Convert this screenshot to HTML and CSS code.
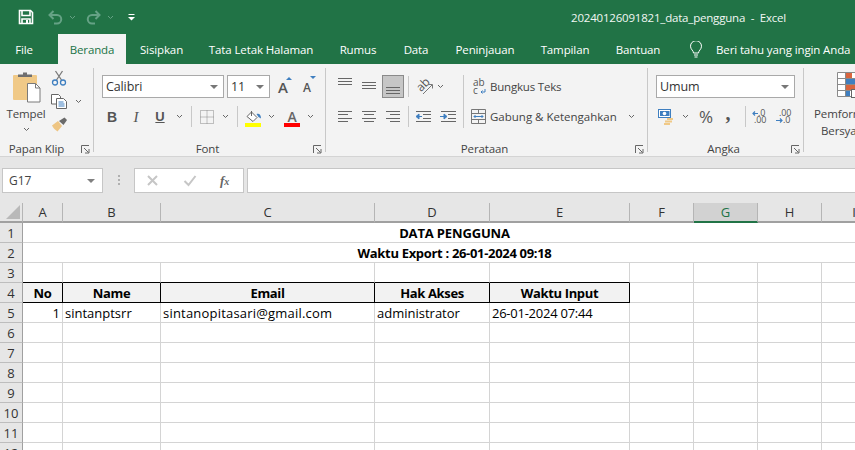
FILE: index.html
```html
<!DOCTYPE html>
<html lang="id">
<head>
<meta charset="utf-8">
<title>20240126091821_data_pengguna - Excel</title>
<link rel="stylesheet" href="styles.css">
</head>
<body>
<div class="app">
  <header class="titlebar">
    <svg class="qat-save" width="16" height="16" viewBox="0 0 16 16"><path d="M1.500 1.500h11l2 2v11h-13z" fill="none" stroke="#fff" stroke-width="1.600"/><path d="M4 2v4.500h8V2" fill="none" stroke="#fff" stroke-width="1.600"/><path d="M4 14.500V10h8v4.500" fill="none" stroke="#fff" stroke-width="1.600"/><rect x="8" y="11" width="2" height="3" fill="#fff"/></svg>
    <svg class="qat-arrow" width="15" height="15" viewBox="0 0 15 15"><path d="M5.500 1 1.500 5l4 4M2 5h7a4 4 0 0 1 0 8.500H6" fill="none" stroke="#65a285" stroke-width="2"/></svg>
    <svg class="qat-chev" width="7" height="5" viewBox="0 0 7 5"><path d="M1 1l2.500 2.500L6 1" fill="none" stroke="#65a285"/></svg>
    <svg class="qat-arrow" width="15" height="15" viewBox="0 0 15 15"><path d="M9.500 1l4 4-4 4M13 5H6a4 4 0 0 0 0 8.500h3" fill="none" stroke="#65a285" stroke-width="2"/></svg>
    <svg class="qat-chev" width="7" height="5" viewBox="0 0 7 5"><path d="M1 1l2.500 2.500L6 1" fill="none" stroke="#65a285"/></svg>
    <svg class="qat-custom" width="7" height="7" viewBox="0 0 7 7"><path d="M.5.500h6" stroke="#fff"/><path d="M0 3h7L3.500 6.500z" fill="#fff"/></svg>
    <div class="doc-title">20240126091821_data_pengguna&nbsp; -&nbsp; Excel</div>
  </header>

  <nav class="tabs">
    <span class="tab tab-file">File</span>
    <span class="tab tab-active">Beranda</span>
    <span class="tab tab-sisipkan">Sisipkan</span>
    <span class="tab tab-tata">Tata Letak Halaman</span>
    <span class="tab tab-rumus">Rumus</span>
    <span class="tab tab-data">Data</span>
    <span class="tab tab-tinjau">Peninjauan</span>
    <span class="tab tab-tampil">Tampilan</span>
    <span class="tab tab-bantu">Bantuan</span>
    <svg class="bulb" width="14" height="17" viewBox="0 0 14 17"><path d="M4.500 12c0-2.500-3-3.500-3-6.800a5.500 5.500 0 0 1 11 0C12.500 8.500 9.500 9.500 9.500 12zM5 14h4M5.500 16h3" fill="none" stroke="#fff"/></svg>
    <span class="tell">Beri tahu yang ingin Anda</span>
  </nav>

  <section class="ribbon">
    <div class="group g-clip">
      <div class="clip-body">
        <div class="paste">
          <svg width="30" height="32" viewBox="0 0 30 32"><rect x="1" y="4" width="24" height="25" rx="1" fill="#f0c987"/><path d="M6 6V3.500h5V1.500h4v2h5V6z" fill="#6f6f6f"/><path d="M15.500 12.500h8l4.500 4.500v14H15.500z" fill="#fff" stroke="#7a7a7a"/><path d="M23.500 12.500V17H28" fill="none" stroke="#7a7a7a"/></svg>
          <span class="paste-label">Tempel</span>
          <svg class="chev" width="7" height="5" viewBox="0 0 7 5"><path d="M1 1l2.500 2.500L6 1" fill="none" stroke="#666"/></svg>
        </div>
        <div class="clip-tools">
          <svg class="scissors" width="16" height="16" viewBox="0 0 16 16"><path d="M4.500 1 10.500 10M11.500 1 5.500 10" stroke="#7a7a7a" stroke-width="1.300" fill="none"/><circle cx="4" cy="12.500" r="2.500" fill="none" stroke="#3f7fc0" stroke-width="1.300"/><circle cx="12" cy="12.500" r="2.500" fill="none" stroke="#3f7fc0" stroke-width="1.300"/></svg>
          <div class="copy-row">
            <svg width="16" height="15" viewBox="0 0 16 15"><path d="M.5.500h7l2 2V10H.5z" fill="#fff" stroke="#666"/><path d="M5.500 4.500h7l3 3v7h-10z" fill="#fff" stroke="#666"/><path d="M7.500 8h5M7.500 10h6M7.500 12h6" stroke="#3f7fc0"/></svg>
            <svg class="chev" width="7" height="5" viewBox="0 0 7 5"><path d="M1 1l2.500 2.500L6 1" fill="none" stroke="#666"/></svg>
          </div>
          <svg class="brush" width="17" height="15" viewBox="0 0 17 15"><path d="M1 8.500 7 4l4 5-4.500 5.500C4.500 13 2 11 1 8.500z" fill="#eec583"/><path d="M8 4 13.500.5 16 3l-3.500 5z" fill="#6a6a6a"/></svg>
        </div>
      </div>
      <div class="group-foot"><span class="group-label label-clip">Papan Klip</span><svg class="launcher" width="9" height="9" viewBox="0 0 9 9"><path d="M.5 8V.5H8M3 3l4.500 4.500M4 8h4V4" fill="none" stroke="#666"/></svg></div>
    </div>

    <div class="group g-font">
      <div class="font-row1">
        <div class="select"><span class="select-text">Calibri</span><i class="caret"></i></div>
        <div class="select"><span class="select-text">11</span><i class="caret"></i></div>
        <span class="grow-a">A<i class="tri-up"></i></span>
        <span class="shrink-a">A<i class="tri-down"></i></span>
      </div>
      <div class="font-row2">
        <b class="fmt">B</b>
        <i class="fmt fmt-i">I</i>
        <u class="fmt fmt-u">U</u>
        <svg class="chev" width="7" height="5" viewBox="0 0 7 5"><path d="M1 1l2.500 2.500L6 1" fill="none" stroke="#666"/></svg>
        <span class="vsep"></span>
        <svg width="14" height="14" viewBox="0 0 14 14"><path d="M.5.500h13v13H.5zM7 .5v13M.5 7h13" fill="none" stroke="#888" stroke-dasharray="1 1"/></svg>
        <svg class="chev" width="7" height="5" viewBox="0 0 7 5"><path d="M1 1l2.500 2.500L6 1" fill="none" stroke="#666"/></svg>
        <span class="vsep"></span>
        <div class="color-btn">
          <svg width="16" height="13" viewBox="0 0 16 13"><path d="M2 6.500 6.500 2l5.500 5.500-4 4z" fill="#fff" stroke="#666"/><path d="M6.500 1V6" stroke="#666"/><path d="M11.500 4c2.500-1 4.500.5 4.500 4.500l-2.500-1.500z" fill="#3f7fc0"/></svg>
          <span class="bar bar-yellow"></span>
        </div>
        <svg class="chev" width="7" height="5" viewBox="0 0 7 5"><path d="M1 1l2.500 2.500L6 1" fill="none" stroke="#666"/></svg>
        <div class="color-btn">
          <span class="color-a">A</span>
          <span class="bar bar-red"></span>
        </div>
        <svg class="chev" width="7" height="5" viewBox="0 0 7 5"><path d="M1 1l2.500 2.500L6 1" fill="none" stroke="#666"/></svg>
      </div>
      <div class="group-foot"><span class="group-label">Font</span><svg class="launcher" width="9" height="9" viewBox="0 0 9 9"><path d="M.5 8V.5H8M3 3l4.500 4.500M4 8h4V4" fill="none" stroke="#666"/></svg></div>
    </div>

    <div class="group g-align">
      <div class="align-body">
        <div class="align-left">
          <div class="align-row">
            <svg class="top" width="14" height="8" viewBox="0 0 14 8"><path d="M0 .5h14M0 3.500h14M0 6.500h14" stroke="#666"/></svg>
            <svg class="mid" width="14" height="8" viewBox="0 0 14 8"><path d="M0 .5h14M0 3.500h14M0 6.500h14" stroke="#666"/></svg>
            <span class="valign-on"><svg width="14" height="7" viewBox="0 0 14 7"><path d="M0 .5h14M0 3.500h14M0 6.500h14" stroke="#666"/></svg></span>
            <span class="vsep"></span>
            <svg class="svg-open" width="17" height="17" viewBox="0 0 17 17"><text class="svg-ab" x="1" y="11" transform="rotate(-45 7 8)">ab</text><path d="M7 16 16 7M12.500 6.500H16.500V10.500" fill="none" stroke="#777"/></svg>
            <svg class="chev" width="7" height="5" viewBox="0 0 7 5"><path d="M1 1l2.500 2.500L6 1" fill="none" stroke="#666"/></svg>
          </div>
          <div class="align-row2">
            <svg width="14" height="11" viewBox="0 0 14 11"><path d="M0 .5h14M0 3.500h10M0 7.500h14M0 10.500h10" stroke="#666"/></svg>
            <svg width="14" height="11" viewBox="0 0 14 11"><path d="M0 .5h14M2 3.500h10M0 7.500h14M2 10.500h10" stroke="#666"/></svg>
            <svg width="14" height="11" viewBox="0 0 14 11"><path d="M0 .5h14M4 3.500h10M0 7.500h14M4 10.500h10" stroke="#666"/></svg>
            <span class="vsep"></span>
            <svg width="16" height="11" viewBox="0 0 16 11"><path d="M1 .5h15M8 3.500h8M8 7.500h8M1 10.500h15" stroke="#666"/><path d="M7 5.500H2.500M4 3 1 5.500 4 8z" stroke="#3f7fc0" fill="#3f7fc0"/></svg>
            <svg width="16" height="11" viewBox="0 0 16 11"><path d="M1 .5h15M8 3.500h8M8 7.500h8M1 10.500h15" stroke="#666"/><path d="M0 5.500h5.500M4 3 7 5.500 4 8z" stroke="#3f7fc0" fill="#3f7fc0"/></svg>
          </div>
        </div>
        <div class="align-right">
          <div class="wrap-row">
            <svg class="svg-open" width="15" height="17" viewBox="0 0 15 17"><text class="svg-wrap" x="2" y="8">ab</text><text class="svg-wrap" x="2" y="16">c</text><path d="M14 11v3H10M11.500 12.500 10 14l1.500 1.500" fill="none" stroke="#3f7fc0"/></svg>
            <span class="wrap-text wrap-tight">Bungkus Teks</span>
          </div>
          <div class="merge-row">
            <svg width="15" height="15" viewBox="0 0 15 15"><path d="M.5.500h14v14H.5zM.5 4.500h14M.5 10.500h14M7.500.5v4M7.500 10.500v4" fill="none" stroke="#777"/><path d="M3 7.500h9" stroke="#3f7fc0"/><path d="M4.500 6 3 7.500 4.500 9M10.500 6 12 7.500 10.500 9" fill="none" stroke="#3f7fc0"/></svg>
            <span class="wrap-text">Gabung &amp; Ketengahkan</span>
            <svg class="chev merge-chev" width="7" height="5" viewBox="0 0 7 5"><path d="M1 1l2.500 2.500L6 1" fill="none" stroke="#666"/></svg>
          </div>
        </div>
      </div>
      <div class="group-foot"><span class="group-label">Perataan</span><svg class="launcher" width="9" height="9" viewBox="0 0 9 9"><path d="M.5 8V.5H8M3 3l4.500 4.500M4 8h4V4" fill="none" stroke="#666"/></svg></div>
    </div>

    <div class="group g-num">
      <div class="select select-num"><span class="select-text">Umum</span><i class="caret"></i></div>
      <div class="num-row">
        <svg width="16" height="16" viewBox="0 0 16 16"><rect x=".5" y=".5" width="12" height="8" fill="#fff" stroke="#3f7fc0"/><path d="M2 2h9.500v5H2z" fill="#3f7fc0"/><circle cx="6.500" cy="4.500" r="1.800" fill="#fff"/><path d="M9 9h6v2H9zM7 11.500h7v2H7zM6 14h6v2H6z" fill="#f0c987"/></svg>
        <svg class="chev" width="7" height="5" viewBox="0 0 7 5"><path d="M1 1l2.500 2.500L6 1" fill="none" stroke="#666"/></svg>
        <span class="pct">%</span>
        <b class="comma">,</b>
        <span class="vsep"></span>
        <svg class="svg-open" width="16" height="14" viewBox="0 0 16 14"><text class="svg-num" x="6" y="6">.0</text><text class="svg-num" x="2" y="13">.00</text><path d="M6 3.500H1M3 1.500 1 3.500l2 2" fill="none" stroke="#3f7fc0" stroke-width="1.200"/></svg>
        <svg class="svg-open" width="16" height="14" viewBox="0 0 16 14"><text class="svg-num" x="3" y="6">.00</text><text class="svg-num" x="7" y="13">.0</text><path d="M0 10.500h6M4 8.500l2 2-2 2" fill="none" stroke="#3f7fc0" stroke-width="1.200"/></svg>
      </div>
      <div class="group-foot"><span class="group-label">Angka</span><svg class="launcher" width="9" height="9" viewBox="0 0 9 9"><path d="M.5 8V.5H8M3 3l4.500 4.500M4 8h4V4" fill="none" stroke="#666"/></svg></div>
    </div>

    <div class="group g-cond">
      <svg class="cond-icon" width="25" height="26" viewBox="0 0 25 26"><path d="M.5.500h24v24H.5zM.5 6.500h24M.5 12.500h24M.5 18.500h24M8.500.5v24" fill="#fff" stroke="#8a8a8a"/><rect x="9" y="1" width="6" height="5" fill="#d9653f"/><rect x="9" y="7" width="15" height="5" fill="#3f7fc0"/><rect x="9" y="13" width="9" height="5" fill="#d9653f"/><rect x="9" y="19" width="4" height="5" fill="#3f7fc0"/><rect x="14.500" y="17.500" width="10" height="8" fill="#fff" stroke="#666"/></svg>
      <span class="cond-text">Pemformatan</span>
      <span class="cond-text cond-text2">Bersyarat</span>
    </div>
  </section>

  <section class="formula">
    <div class="namebox"><span>G17</span><i class="caret caret-name"></i></div>
    <span class="grip"></span>
    <div class="fx-box">
      <svg width="13" height="13" viewBox="0 0 13 13"><path d="M2 2l9 9M11 2l-9 9" stroke="#c6c6c6" stroke-width="2"/></svg>
      <svg width="14" height="13" viewBox="0 0 14 13"><path d="M1.500 7l4 4 7-9" fill="none" stroke="#c6c6c6" stroke-width="2"/></svg>
      <span class="fx">f<small>x</small></span>
    </div>
    <div class="formula-input"></div>
  </section>

  <main class="sheet">
    <table class="grid">
      <colgroup>
        <col class="c-row"><col class="c-a"><col class="c-b"><col class="c-c"><col class="c-d"><col class="c-e"><col class="c-std"><col class="c-std"><col class="c-std"><col class="c-std">
      </colgroup>
      <thead>
        <tr>
          <th class="corner"><svg class="corner-tri" width="14" height="14" viewBox="0 0 14 14"><path d="M14 0v14H0z" fill="#b9b9b9"/></svg></th>
          <th>A</th><th>B</th><th>C</th><th>D</th><th>E</th><th>F</th><th class="col-sel">G</th><th>H</th><th>I</th>
        </tr>
      </thead>
      <tbody>
        <tr><th>1</th><td colspan="9" class="merged merged-title">DATA PENGGUNA</td></tr>
        <tr><th>2</th><td colspan="9" class="merged">Waktu Export : 26-01-2024 09:18</td></tr>
        <tr><th>3</th><td class="above"></td><td class="above"></td><td class="above"></td><td class="above"></td><td class="above"></td><td></td><td></td><td></td><td></td></tr>
        <tr><th>4</th><td class="hd">No</td><td class="hd">Name</td><td class="hd">Email</td><td class="hd">Hak Akses</td><td class="hd">Waktu Input</td><td></td><td></td><td></td><td></td></tr>
        <tr><th>5</th><td class="num">1</td><td>sintanptsrr</td><td class="email">sintanopitasari@gmail.com</td><td>administrator</td><td class="date">26-01-2024 07:44</td><td></td><td></td><td></td><td></td></tr>
        <tr><th>6</th><td></td><td></td><td></td><td></td><td></td><td></td><td></td><td></td><td></td></tr>
        <tr><th>7</th><td></td><td></td><td></td><td></td><td></td><td></td><td></td><td></td><td></td></tr>
        <tr><th>8</th><td></td><td></td><td></td><td></td><td></td><td></td><td></td><td></td><td></td></tr>
        <tr><th>9</th><td></td><td></td><td></td><td></td><td></td><td></td><td></td><td></td><td></td></tr>
        <tr><th>10</th><td></td><td></td><td></td><td></td><td></td><td></td><td></td><td></td><td></td></tr>
        <tr><th>11</th><td></td><td></td><td></td><td></td><td></td><td></td><td></td><td></td><td></td></tr>
        <tr><th>12</th><td></td><td></td><td></td><td></td><td></td><td></td><td></td><td></td><td></td></tr>
      </tbody>
    </table>
  </main>
</div>
</body>
</html>
```

FILE: styles.css
```css
* { box-sizing: border-box; }
html, body { margin: 0; padding: 0; }
body { width: 855px; height: 450px; overflow: hidden; font-family: "Open Sans", "Noto Sans", sans-serif; color: #444; background: #fff; }
.app { width: 855px; height: 450px; overflow: hidden; display: flex; flex-direction: column; }
svg { display: block; flex-shrink: 0; }
.svg-open { overflow: visible; }

/* title bar */
.titlebar { height: 34px; flex: none; background: #217346; display: flex; align-items: center; color: #fff; }
.qat-save { margin-left: 18px; }
.qat-arrow { margin-left: 14px; }
.qat-arrow + .qat-chev { margin-left: 6px; }
.qat-chev + .qat-arrow { margin-left: 10px; }
.qat-custom { margin-left: 14px; }
.doc-title { margin-left: auto; margin-right: 69px; font-size: 11.5px; letter-spacing: -.2px; white-space: nowrap; color: #f2f7f4; }

/* tabs */
.tabs { height: 30px; flex: none; background: #217346; display: flex; align-items: stretch; color: #fff; font-size: 11.5px; letter-spacing: -.12px; white-space: nowrap; overflow: hidden; }
.tab { display: flex; align-items: center; justify-content: center; }
.tab-file { width: 58px; padding-left: 2px; padding-right: 12px; }
.tab-active { width: 68px; background: #f3f3f3; color: #217346; }
.tab-sisipkan { width: 70px; padding-left: 1px; }
.tab-tata { width: 130px; }
.tab-rumus { width: 64px; }
.tab-data { width: 52px; }
.tab-tinjau { width: 86px; }
.tab-tampil { width: 74px; }
.tab-bantu { width: 72px; }
.bulb { margin: 7px 0 0 15px; align-self: flex-start; }
.tell { margin-left: 13px; align-self: center; }

/* ribbon */
.ribbon { height: 93px; flex: none; background: #f3f3f3; border-bottom: 1px solid #d4d4d4; padding-top: 4px; display: flex; align-items: flex-start; overflow: hidden; font-size: 11.5px; letter-spacing: -.12px; color: #444; }
.group { height: 84px; flex: none; border-right: 1px solid #c8c8c8; display: flex; flex-direction: column; padding-top: 7px; }
.group-foot { margin-top: auto; margin-bottom: -5px; height: 16px; display: flex; align-items: center; flex: none; }
.group-label { flex: 1; text-align: center; line-height: 16px; }
.label-clip { padding-right: 8px; }
.launcher { margin-right: 3px; margin-top: 1px; }
.chev { flex: none; }
.vsep { display: block; width: 1px; height: 21px; background: #c8c8c8; }

.g-clip { width: 94px; padding-top: 0; }
.clip-body { display: flex; height: 68px; }
.paste { width: 52px; display: flex; flex-direction: column; align-items: center; }
.paste svg:first-child { margin: 3px 0 0 2px; }
.paste-label { margin-top: 2px; line-height: 17px; }
.paste .chev { margin-top: 5px; }
.clip-tools { display: flex; flex-direction: column; padding-top: 2px; gap: 8px; }
.clip-tools .scissors { margin-left: -1px; }
.clip-tools .brush { margin-left: -1px; }
.copy-row { display: flex; align-items: center; gap: 8px; margin-left: -1px; }

.g-font { width: 232px; padding-left: 8px; }
.font-row1 { display: flex; align-items: center; height: 23px; }
.select { height: 23px; background: #fff; border: 1px solid #a9a9a9; display: flex; align-items: center; justify-content: space-between; padding: 0 5px 0 3px; font-size: 12.5px; color: #333; flex: none; }
.select:first-child { width: 122px; }
.select:nth-child(2) { width: 43px; margin-left: 3px; }
.caret { display: block; width: 0; height: 0; border: 4px solid transparent; border-top-color: #777; border-bottom-width: 0; }
.grow-a, .shrink-a { position: relative; color: #555; line-height: 16px; font-weight: 600; }
.grow-a { margin-left: 8px; width: 25px; font-size: 15px; }
.shrink-a { width: 14px; margin-top: 2px; font-size: 12px; }
.tri-up, .tri-down { position: absolute; width: 0; height: 0; border: 3px solid transparent; }
.grow-a .tri-up { left: 8px; top: -2px; border-bottom: 3px solid #3f7fc0; border-top-width: 0; }
.shrink-a .tri-down { left: 7px; top: -4px; border-top: 3px solid #3f7fc0; border-bottom-width: 0; }
.font-row2 { display: grid; grid-template-columns: 20px 28px 20px 18px 6px 25px 12px 12px 20px 16px 26px 10px; justify-items: center; align-items: center; height: 23px; margin-top: 7px; }
.fmt { font-family: "Liberation Sans", sans-serif; font-size: 14px; color: #555; line-height: 16px; }
.fmt-i { font-family: "Liberation Serif", serif; font-size: 15px; }
.fmt-u { font-weight: 700; font-size: 13px; }
.color-btn { display: flex; flex-direction: column; align-items: center; width: 16px; height: 20px; justify-content: flex-end; }
.bar { display: block; width: 16px; height: 4px; flex: none; }
.bar-yellow { background: #ffff00; }
.bar-red { background: #ff0000; }
.color-a { font-size: 14px; line-height: 13px; color: #666; font-weight: 600; }

.g-align { width: 322px; padding-left: 8px; }
.align-body { display: flex; height: 53px; }
.align-left { width: 130px; flex: none; border-right: 1px solid #c8c8c8; }
.align-row { display: grid; grid-template-columns: 22px 26px 22px 8px 24px 8px; justify-items: center; align-items: center; height: 23px; }
.align-row .top { margin-bottom: 9px; }
.align-row .mid { margin-top: -1px; }
.valign-on { width: 22px; height: 23px; background: #c6c6c6; border: 1px solid #8a8a8a; display: flex; align-items: flex-end; justify-content: center; padding-bottom: 3px; }
.align-row2 { display: grid; grid-template-columns: 22px 26px 22px 8px 22px 28px; justify-items: center; align-items: center; height: 23px; margin-top: 7px; }
.align-right { padding-left: 7px; flex: 1; }
.wrap-row { display: flex; align-items: center; height: 23px; }
.merge-row { display: flex; align-items: center; height: 23px; margin-top: 7px; }
.wrap-text { margin-left: 4px; white-space: nowrap; color: #444; letter-spacing: 0; }
.wrap-tight { letter-spacing: -.2px; }
.merge-chev { margin-left: 11px; }
.svg-ab { font-size: 12px; fill: #555; font-family: "Open Sans", sans-serif; }
.svg-wrap { font-size: 10px; fill: #555; font-family: "Open Sans", sans-serif; }
.svg-num { font-size: 9px; fill: #555; font-family: "Open Sans", sans-serif; }

.g-num { width: 156px; padding-left: 8px; }
.select-num.select { width: 139px; }
.num-row { display: grid; grid-template-columns: 20px 18px 24px 20px 14px 16px 31px; justify-items: center; align-items: center; height: 23px; margin-top: 7px; }
.pct { font-size: 17px; color: #555; line-height: 18px; }
.comma { font-size: 20px; color: #555; line-height: 14px; font-family: "Liberation Serif", serif; margin-top: -8px; }

.g-cond { width: 60px; border-right: 0; padding-top: 4px; padding-left: 10px; }
.cond-icon { margin-left: 23px; }
.cond-text { white-space: nowrap; line-height: 17px; margin-top: 7px; }
.cond-text2 { margin: 0 0 0 7px; }

/* formula bar */
.formula { height: 46px; flex: none; background: #e6e6e6; display: flex; align-items: flex-start; padding-top: 11px; }
.namebox { width: 101px; height: 25px; margin-left: 2px; background: #fff; border: 1px solid #c6c6c6; display: flex; align-items: center; justify-content: space-between; padding: 0 7px 0 6px; font-size: 12px; color: #444; flex: none; }
.caret-name { border-top-color: #808080; }
.grip { width: 2px; height: 11px; margin: 7px 14px 0 15px; flex: none; background: repeating-linear-gradient(#b0b0b0 0 2px, transparent 2px 4px); }
.fx-box { width: 110px; height: 25px; flex: none; background: #fff; border: 1px solid #c6c6c6; display: flex; align-items: center; padding-left: 11px; gap: 24px; }
.fx { font-family: "Liberation Serif", serif; font-style: italic; font-weight: 700; font-size: 13px; color: #666; margin-left: -1px; }
.fx small { font-size: 10px; }
.formula-input { flex: 1; height: 25px; margin-left: 3px; background: #fff; border: 1px solid #c6c6c6; border-right: 0; }

/* sheet */
.sheet { flex: 1; overflow: hidden; background: #fff; }
.grid { border-collapse: separate; border-spacing: 0; table-layout: fixed; width: 885px; font-size: 13px; color: #000; }
.c-row { width: 23px; }
.c-a { width: 40px; }
.c-b { width: 98px; }
.c-c { width: 214px; }
.c-d { width: 115px; }
.c-e { width: 140px; }
.c-std { width: 64px; }
.grid thead th { height: 20px; background: #e6e6e6; font-weight: 400; font-size: 13px; color: #333; border-right: 1px solid #b5b5b5; border-bottom: 2px solid #a0a0a0; padding: 0; position: relative; }
.grid thead th:last-child { border-right: 0; }
.corner-tri { position: absolute; right: 2px; bottom: 2px; }
.grid thead .col-sel { background: #d2d2d2; color: #217346; border-bottom-color: #217346; }
.grid tbody th { height: 20px; background: #e6e6e6; font-weight: 400; font-size: 13px; color: #333; border-right: 1px solid #a0a0a0; border-bottom: 1px solid #bdbdbd; padding: 0; }
.grid td { height: 20px; padding: 0 2px; border-right: 1px solid #d4d4d4; border-bottom: 1px solid #d4d4d4; white-space: nowrap; overflow: hidden; line-height: 18px; }
.grid .merged { text-align: center; font-weight: 700; border-right: 0; letter-spacing: -.32px; }
.grid .merged-title { letter-spacing: -.15px; }
.grid .above { border-bottom-color: #000; }
.grid .hd { text-align: center; font-weight: 700; letter-spacing: -.35px; background: #f2f2f2; border-right: 1px solid #000; border-bottom: 1px solid #000; }
.grid .num { text-align: right; }
.grid .email { letter-spacing: .2px; }
.grid .date { letter-spacing: -.25px; }
```
